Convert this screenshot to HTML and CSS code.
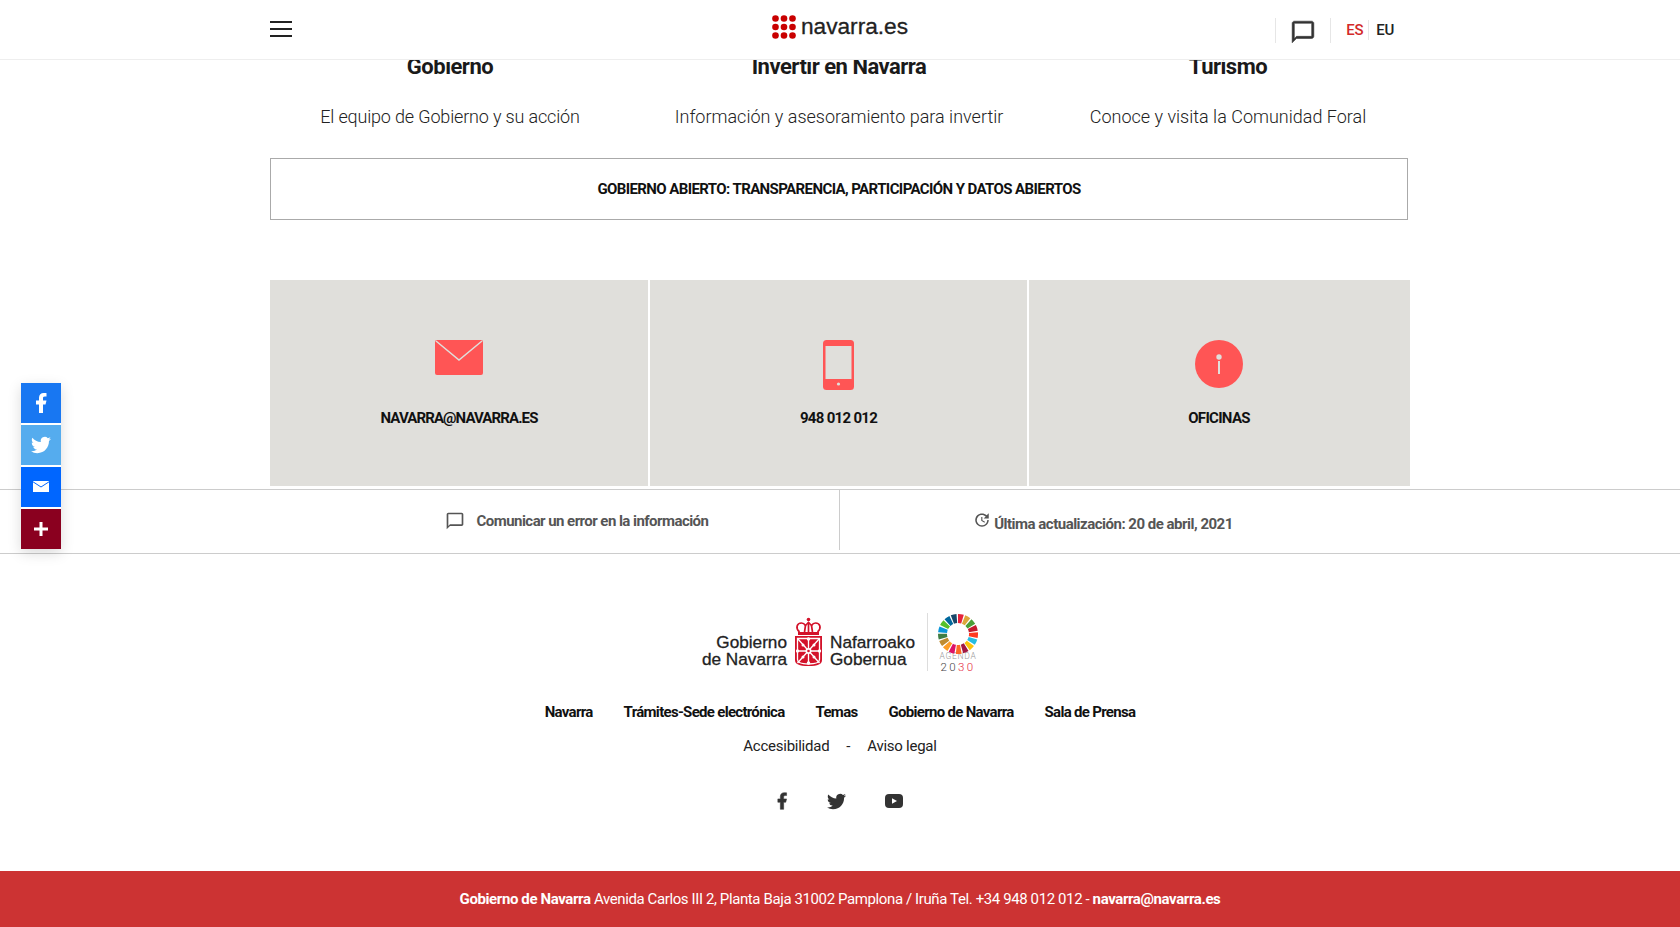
FILE: index.html
```html
<!DOCTYPE html>
<html lang="es">
<head>
<meta charset="utf-8">
<title>navarra.es</title>
<link rel="stylesheet" href="styles.css">
</head>
<body>
<header class="site-header">
  <div class="header-inner">
    <button class="burger" aria-label="Menú"><span></span><span></span><span></span></button>
    <a class="brand" href="#">
      <svg class="brand-dots" viewBox="0 0 24 24" width="24" height="24" fill="#c90000">
        <circle cx="3.5" cy="3.5" r="3.3"/><circle cx="12" cy="3.5" r="3.3"/><circle cx="20.5" cy="3.5" r="3.3"/>
        <circle cx="3.5" cy="12" r="3.3"/><circle cx="12" cy="12" r="3.3"/><circle cx="20.5" cy="12" r="3.3"/>
        <circle cx="3.5" cy="20.5" r="3.3"/><circle cx="12" cy="20.5" r="3.3"/><circle cx="20.5" cy="20.5" r="3.3"/>
      </svg>
      <span class="brand-text">navarra.es</span>
    </a>
    <div class="header-tools">
      <a class="tool-chat" href="#" aria-label="Contacto">
        <svg viewBox="0 0 24 24" width="26" height="26" fill="#333" stroke="#333" stroke-width=".5"><path d="M20 2H4c-1.1 0-2 .9-2 2v18l4-4h14c1.1 0 2-.9 2-2V4c0-1.100-.9-2-2-2zm0 14H6l-2 2V4h16v12z"/></svg>
      </a>
      <div class="langs"><a class="lang lang-on" href="#">ES</a><a class="lang" href="#">EU</a></div>
    </div>
  </div>
</header>

<aside class="share">
  <a class="share-btn share-fb" href="#" aria-label="Facebook"><svg viewBox="0 0 24 24" width="24" height="24" fill="#fff"><path d="M14 13.500h2.500l1-4H14v-2c0-1.030 0-2 2-2h1.500V2.140c-.326-.043-1.557-.14-2.857-.14C11.928 2 10 3.657 10 6.700v2.800H7v4h3V22h4z"/></svg></a>
  <a class="share-btn share-tw" href="#" aria-label="Twitter"><svg viewBox="0 0 24 24" width="20" height="20" fill="#fff"><path d="M23.953 4.570a10 10 0 01-2.825.775 4.958 4.958 0 002.163-2.723c-.951.555-2.005.959-3.127 1.184a4.920 4.920 0 00-8.384 4.482C7.690 8.095 4.067 6.130 1.640 3.162a4.822 4.822 0 00-.666 2.475c0 1.710.870 3.213 2.188 4.096a4.904 4.904 0 01-2.228-.616v.060a4.923 4.923 0 003.946 4.827 4.996 4.996 0 01-2.212.085 4.936 4.936 0 004.604 3.417 9.867 9.867 0 01-6.102 2.105c-.390 0-.779-.023-1.170-.067a13.995 13.995 0 007.557 2.209c9.053 0 13.998-7.496 13.998-13.985 0-.210 0-.420-.015-.630A9.935 9.935 0 0024 4.590z"/></svg></a>
  <a class="share-btn share-mail" href="#" aria-label="Correo"><svg class="mail-icon" viewBox="0 0 16 11" width="16" height="11"><path fill="#fff" d="M0 0h16v11H0z"/><path fill="none" stroke="#0066ff" stroke-width="1" d="M0 .8 8 6 16 .8"/></svg></a>
  <a class="share-btn share-more" href="#" aria-label="Más"><svg viewBox="0 0 14 14" width="14" height="14" fill="#fff"><path d="M5.500 0h3v5.500H14v3H8.500V14h-3V8.500H0v-3h5.500z"/></svg></a>
</aside>

<main class="page">
  <section class="areas">
    <article class="area"><h2 class="area-title">Gobierno</h2><p class="area-text">El equipo de Gobierno y su acción</p></article>
    <article class="area"><h2 class="area-title">Invertir en Navarra</h2><p class="area-text">Información y asesoramiento para invertir</p></article>
    <article class="area"><h2 class="area-title">Turismo</h2><p class="area-text">Conoce y visita la Comunidad Foral</p></article>
  </section>
  <a class="open-gov" href="#">GOBIERNO ABIERTO: TRANSPARENCIA, PARTICIPACIÓN Y DATOS ABIERTOS</a>
  <section class="contact">
    <a class="contact-card" href="#">
      <svg class="contact-icon" viewBox="0 0 48 35" width="48" height="35"><rect width="48" height="35" rx="2" fill="#ff5555"/><path d="M1 1 24 20 47 1" fill="none" stroke="#e0dfdb" stroke-width="1.500"/></svg>
      <span class="contact-label">NAVARRA@NAVARRA.ES</span>
    </a>
    <a class="contact-card" href="#">
      <svg class="contact-icon" viewBox="0 0 31 50" width="31" height="50"><rect width="31" height="50" rx="3.500" fill="#ff5555"/><rect x="2.500" y="6" width="26" height="33" fill="#e0dfdb"/><circle cx="15.500" cy="44" r="1.600" fill="#e0dfdb"/></svg>
      <span class="contact-label">948 012 012</span>
    </a>
    <a class="contact-card contact-card-last" href="#">
      <svg class="contact-icon" viewBox="0 0 48 48" width="48" height="48"><circle cx="24" cy="24" r="24" fill="#ff5555"/><circle cx="24" cy="17" r="2.700" fill="#e0dfdb"/><rect x="23" y="21" width="2" height="13" fill="#e0dfdb"/></svg>
      <span class="contact-label">OFICINAS</span>
    </a>
  </section>
</main>

<section class="feedback">
  <div class="feedback-inner">
    <a class="feedback-cell feedback-report" href="#">
      <svg viewBox="0 0 24 24" width="20" height="20" fill="#555"><path d="M20 2H4c-1.100 0-2 .9-2 2v18l4-4h14c1.100 0 2-.9 2-2V4c0-1.100-.9-2-2-2zm0 14H6l-2 2V4h16v12z"/></svg>
      <span>Comunicar un error en la información</span>
    </a>
    <div class="feedback-cell feedback-date">
      <svg class="date-icon" viewBox="0 0 24 24" width="18" height="18" fill="#555"><path d="M21 10.120h-6.780l2.740-2.820c-2.730-2.700-7.150-2.800-9.880-.100-2.730 2.710-2.730 7.080 0 9.790s7.150 2.710 9.880 0C18.320 15.650 19 14.080 19 12.100h2c0 1.980-.880 4.550-2.640 6.290-3.510 3.480-9.210 3.480-12.720 0-3.500-3.470-3.530-9.110-.020-12.580s9.140-3.470 12.650 0L21 3v7.120zM12.500 8v4.250l3.500 2.080-.720 1.210L11 13V8h1.500z"/></svg>
      <span>Última actualización: 20 de abril, 2021</span>
    </div>
  </div>
</section>

<footer class="site-footer">
  <div class="footer-logo">
    <div class="gov-text gov-text-left">Gobierno<br>de Navarra</div>
    <svg class="shield" viewBox="0 0 29 50" width="29" height="50">
      <g fill="none" stroke="#d3122a" stroke-width="1.700">
        <path d="M5.500 15c-4.500-4-2.500-9 2-9 2 0 3 1 4 2.500l3-3 3 3c1-1.500 2-2.500 4-2.500 4.500 0 6.500 5 2 9"/>
        <path d="M11.500 8.500 10.500 15M17.500 8.500 18.500 15M14.500 5.500V15"/>
      </g>
      <circle cx="14.500" cy="2.500" r="1.800" fill="#d3122a"/>
      <rect x="4" y="15" width="21" height="3" fill="#d3122a"/>
      <path d="M1 19h27v24c0 4-4 6-13.500 6S1 47 1 43z" fill="#d3122a"/>
      <g fill="none" stroke="#fff" stroke-width="1.300">
        <path d="M3.500 21.500h22v21c0 3-3 4.500-11 4.500s-11-1.500-11-4.500z"/>
        <path d="M3.500 21.500 25.500 46M25.500 21.500 3.500 46M14.500 21.500V47M3.500 34h22"/>
      </g>
      <g fill="#fff">
        <circle cx="14.500" cy="22" r="1.700"/><circle cx="14.500" cy="46" r="1.700"/>
        <circle cx="3.500" cy="34" r="1.700"/><circle cx="25.500" cy="34" r="1.700"/>
        <circle cx="9" cy="28" r="1.500"/><circle cx="20" cy="28" r="1.500"/>
        <circle cx="9" cy="40" r="1.500"/><circle cx="20" cy="40" r="1.500"/>
        <circle cx="14.500" cy="34" r="3"/>
      </g>
      <circle cx="14.500" cy="34" r="1.300" fill="#d3122a"/>
    </svg>
    <div class="gov-text">Nafarroako<br>Gobernua</div>
    <div class="logo-divider"></div>
    <div class="agenda">
      <svg viewBox="0 0 40 40" width="40" height="40" fill="none" stroke-width="9" transform="rotate(-90)">
        <circle cx="20" cy="20" r="15.500" stroke="#e5243b" stroke-dasharray="4.600 92.800"/>
        <circle cx="20" cy="20" r="15.500" stroke="#dda63a" stroke-dasharray="4.600 92.800" transform="rotate(21.200 20 20)"/>
        <circle cx="20" cy="20" r="15.500" stroke="#4c9f38" stroke-dasharray="4.600 92.800" transform="rotate(42.400 20 20)"/>
        <circle cx="20" cy="20" r="15.500" stroke="#c5192d" stroke-dasharray="4.600 92.800" transform="rotate(63.500 20 20)"/>
        <circle cx="20" cy="20" r="15.500" stroke="#ff3a21" stroke-dasharray="4.600 92.800" transform="rotate(84.700 20 20)"/>
        <circle cx="20" cy="20" r="15.500" stroke="#26bde2" stroke-dasharray="4.600 92.800" transform="rotate(105.900 20 20)"/>
        <circle cx="20" cy="20" r="15.500" stroke="#fcc30b" stroke-dasharray="4.600 92.800" transform="rotate(127.100 20 20)"/>
        <circle cx="20" cy="20" r="15.500" stroke="#a21942" stroke-dasharray="4.600 92.800" transform="rotate(148.200 20 20)"/>
        <circle cx="20" cy="20" r="15.500" stroke="#fd6925" stroke-dasharray="4.600 92.800" transform="rotate(169.400 20 20)"/>
        <circle cx="20" cy="20" r="15.500" stroke="#dd1367" stroke-dasharray="4.600 92.800" transform="rotate(190.600 20 20)"/>
        <circle cx="20" cy="20" r="15.500" stroke="#fd9d24" stroke-dasharray="4.600 92.800" transform="rotate(211.800 20 20)"/>
        <circle cx="20" cy="20" r="15.500" stroke="#bf8b2e" stroke-dasharray="4.600 92.800" transform="rotate(232.900 20 20)"/>
        <circle cx="20" cy="20" r="15.500" stroke="#3f7e44" stroke-dasharray="4.600 92.800" transform="rotate(254.100 20 20)"/>
        <circle cx="20" cy="20" r="15.500" stroke="#0a97d9" stroke-dasharray="4.600 92.800" transform="rotate(275.300 20 20)"/>
        <circle cx="20" cy="20" r="15.500" stroke="#56c02b" stroke-dasharray="4.600 92.800" transform="rotate(296.500 20 20)"/>
        <circle cx="20" cy="20" r="15.500" stroke="#00689d" stroke-dasharray="4.600 92.800" transform="rotate(317.600 20 20)"/>
        <circle cx="20" cy="20" r="15.500" stroke="#19486a" stroke-dasharray="4.600 92.800" transform="rotate(338.800 20 20)"/>
      </svg>
      <span class="agenda-word">AGENDA</span>
      <span class="agenda-year">20<em>30</em></span>
    </div>
  </div>
  <nav class="footer-nav">
    <a href="#">Navarra</a><a href="#">Trámites-Sede electrónica</a><a href="#">Temas</a><a href="#">Gobierno de Navarra</a><a href="#">Sala de Prensa</a>
  </nav>
  <nav class="footer-legal">
    <a href="#">Accesibilidad</a><span>-</span><a href="#">Aviso legal</a>
  </nav>
  <div class="footer-social">
    <a href="#" aria-label="Facebook"><svg viewBox="0 0 24 24" width="20" height="20" fill="#333" stroke="#333" stroke-width=".6"><path d="M14 13.500h2.500l1-4H14v-2c0-1.030 0-2 2-2h1.500V2.140c-.326-.043-1.557-.14-2.857-.14C11.928 2 10 3.657 10 6.700v2.800H7v4h3V22h4z"/></svg></a>
    <a class="social-tw" href="#" aria-label="Twitter"><svg viewBox="0 0 24 24" width="19" height="19" fill="#333"><path d="M23.953 4.570a10 10 0 01-2.825.775 4.958 4.958 0 002.163-2.723c-.951.555-2.005.959-3.127 1.184a4.920 4.920 0 00-8.384 4.482C7.690 8.095 4.067 6.130 1.640 3.162a4.822 4.822 0 00-.666 2.475c0 1.710.870 3.213 2.188 4.096a4.904 4.904 0 01-2.228-.616v.060a4.923 4.923 0 003.946 4.827 4.996 4.996 0 01-2.212.085 4.936 4.936 0 004.604 3.417 9.867 9.867 0 01-6.102 2.105c-.390 0-.779-.023-1.170-.067a13.995 13.995 0 007.557 2.209c9.053 0 13.998-7.496 13.998-13.985 0-.210 0-.420-.015-.630A9.935 9.935 0 0024 4.590z"/></svg></a>
    <a href="#" aria-label="YouTube"><svg viewBox="0 0 18 14" width="18" height="14"><rect width="18" height="14" rx="4" fill="#333"/><path d="M7 4.200 12 7l-5 2.800z" fill="#fff"/></svg></a>
  </div>
  <div class="footer-bar">
    <strong>Gobierno de Navarra</strong> Avenida Carlos III 2, Planta Baja 31002 Pamplona / Iruña Tel. +34 948 012 012 - <strong>navarra@navarra.es</strong>
  </div>
</footer>
</body>
</html>
```
FILE: styles.css
```css
* { box-sizing: border-box; }
html, body { margin: 0; padding: 0; }
body { font-family: Roboto, "Liberation Sans", sans-serif; color: #1a1a1a; background: #fff; overflow: hidden; }
a { color: inherit; text-decoration: none; }

.site-header { position: fixed; top: 0; left: 0; right: 0; height: 60px; background: #fff; border-bottom: 1px solid #eee; z-index: 5; }
.header-inner { width: 1140px; margin: 0 auto; height: 59px; display: grid; grid-template-columns: 1fr auto 1fr; align-items: center; }
.burger { width: 22px; height: 16px; margin-top: -1px; padding: 0; border: 0; background: none; display: flex; flex-direction: column; justify-content: space-between; }
.burger span { display: block; height: 2px; background: #222; }
.brand { display: flex; align-items: center; gap: 5px; margin-top: -6px; }
.brand-text { font-family: "Liberation Sans", Arial, sans-serif; font-size: 22.7px; color: #222; -webkit-text-stroke: .3px #222; }
.header-tools { display: flex; align-items: center; justify-content: flex-end; padding-right: 9px; padding-top: 1px; }
.tool-chat { display: flex; align-items: center; justify-content: center; height: 25px; width: 56px; padding-top: 4px; border-left: 1px solid #e6e6e6; border-right: 1px solid #e6e6e6; }
.langs { display: flex; align-items: center; padding-left: 15px; font-size: 15px; font-weight: 500; letter-spacing: -.3px; }
.lang { padding: 0 7px; line-height: 20px; color: #222; }
.lang-on { color: #d32a2a; padding-left: 0; padding-right: 5px; border-right: 1px solid #e6e6e6; }

.share { position: fixed; left: 21px; top: 383px; display: flex; flex-direction: column; gap: 2px; box-shadow: 0 4px 14px rgba(0,0,0,.15); z-index: 4; }
.share-btn { width: 40px; height: 40px; display: flex; align-items: center; justify-content: center; }
.share-fb { background: #1877f2; }
.share-tw { background: #55acee; }
.share-mail { background: #0066ff; }
.share-more { background: #8a001f; }
.mail-icon { margin-bottom: 2px; }

.page { width: 1140px; margin: 0 auto; padding-top: 53px; }
.areas { display: grid; grid-template-columns: 360px 380px 360px; column-gap: 19px; text-align: center; }
.area-title { margin: 0; font-size: 22px; line-height: 28px; font-weight: 700; letter-spacing: -.5px; color: #1a1a1a; }
.area-text { margin: 23px 0 0; font-size: 18px; line-height: 26px; font-weight: 300; color: #222; }
.area:first-child .area-text { letter-spacing: -.16px; }
.open-gov { display: flex; align-items: center; justify-content: center; width: 1138px; height: 62px; margin-top: 28px; border: 1px solid #aaa; font-size: 15px; font-weight: 700; letter-spacing: -.6px; color: #111; }
.contact { display: grid; grid-template-columns: 378px 377px 381px; column-gap: 2px; margin-top: 60px; }
.contact-card { height: 206px; background: #e0dfdb; display: grid; grid-template-rows: 69px auto; justify-items: center; align-content: start; padding-top: 60px; font-size: 15px; font-weight: 700; letter-spacing: -.7px; color: #111; }
.contact-card:first-child { letter-spacing: -.9px; }
.contact-card-last { padding-right: 1px; }
.contact-label { line-height: 18px; }

.feedback { margin-top: 3px; height: 65px; border-top: 1px solid #ccc; border-bottom: 1px solid #ccc; }
.feedback-inner { width: 1140px; margin: 0 auto; height: 60px; display: grid; grid-template-columns: 570px 570px; font-size: 15px; font-weight: 700; letter-spacing: -.5px; color: #555; }
.feedback-cell { display: flex; align-items: center; justify-content: center; }
.feedback-report { gap: 12px; padding-left: 44px; padding-top: 1px; letter-spacing: -.55px; border-right: 1px solid #ccc; }
.feedback-date { gap: 3px; padding-top: 8px; padding-right: 44px; }
.date-icon { margin-bottom: 8px; }

.footer-logo { display: flex; justify-content: center; align-items: center; margin-top: 58px; height: 60px; gap: 7px; }
.gov-text { font-family: "Liberation Sans", Arial, sans-serif; font-size: 17.2px; line-height: 17px; padding-top: 18px; color: #222; -webkit-text-stroke: .3px #222; }
.gov-text-left { text-align: right; }
.logo-divider { width: 1px; height: 58px; background: #ddd; margin-left: 5px; margin-right: 3px; }
.agenda { display: flex; flex-direction: column; align-items: center; align-self: flex-start; width: 40px; padding-top: 2px; }
.agenda-word { font-size: 8.5px; line-height: 10px; color: #999; font-weight: 300; letter-spacing: .7px; margin-top: -3px; }
.agenda-year { font-size: 11.5px; line-height: 13px; font-weight: 300; color: #444; letter-spacing: 2.4px; }
.agenda-year em { font-style: normal; color: #e5243b; }

.footer-nav { display: flex; justify-content: center; gap: 31px; margin-top: 30px; font-size: 15px; font-weight: 700; letter-spacing: -.7px; color: #111; line-height: 20px; }
.footer-legal { display: flex; justify-content: center; gap: 17px; margin-top: 14px; font-size: 15px; letter-spacing: -.25px; color: #222; line-height: 20px; }
.footer-social { display: flex; justify-content: center; align-items: center; gap: 35px; margin-top: 33px; height: 24px; padding-right: 5px; }
.footer-social a { display: flex; }
.footer-social .social-tw { margin-right: 4px; }
.footer-bar { margin-top: 58px; height: 56px; background: #cc3333; color: #fff; font-size: 15px; letter-spacing: -.39px; display: flex; align-items: center; justify-content: center; white-space: pre-wrap; }
```
